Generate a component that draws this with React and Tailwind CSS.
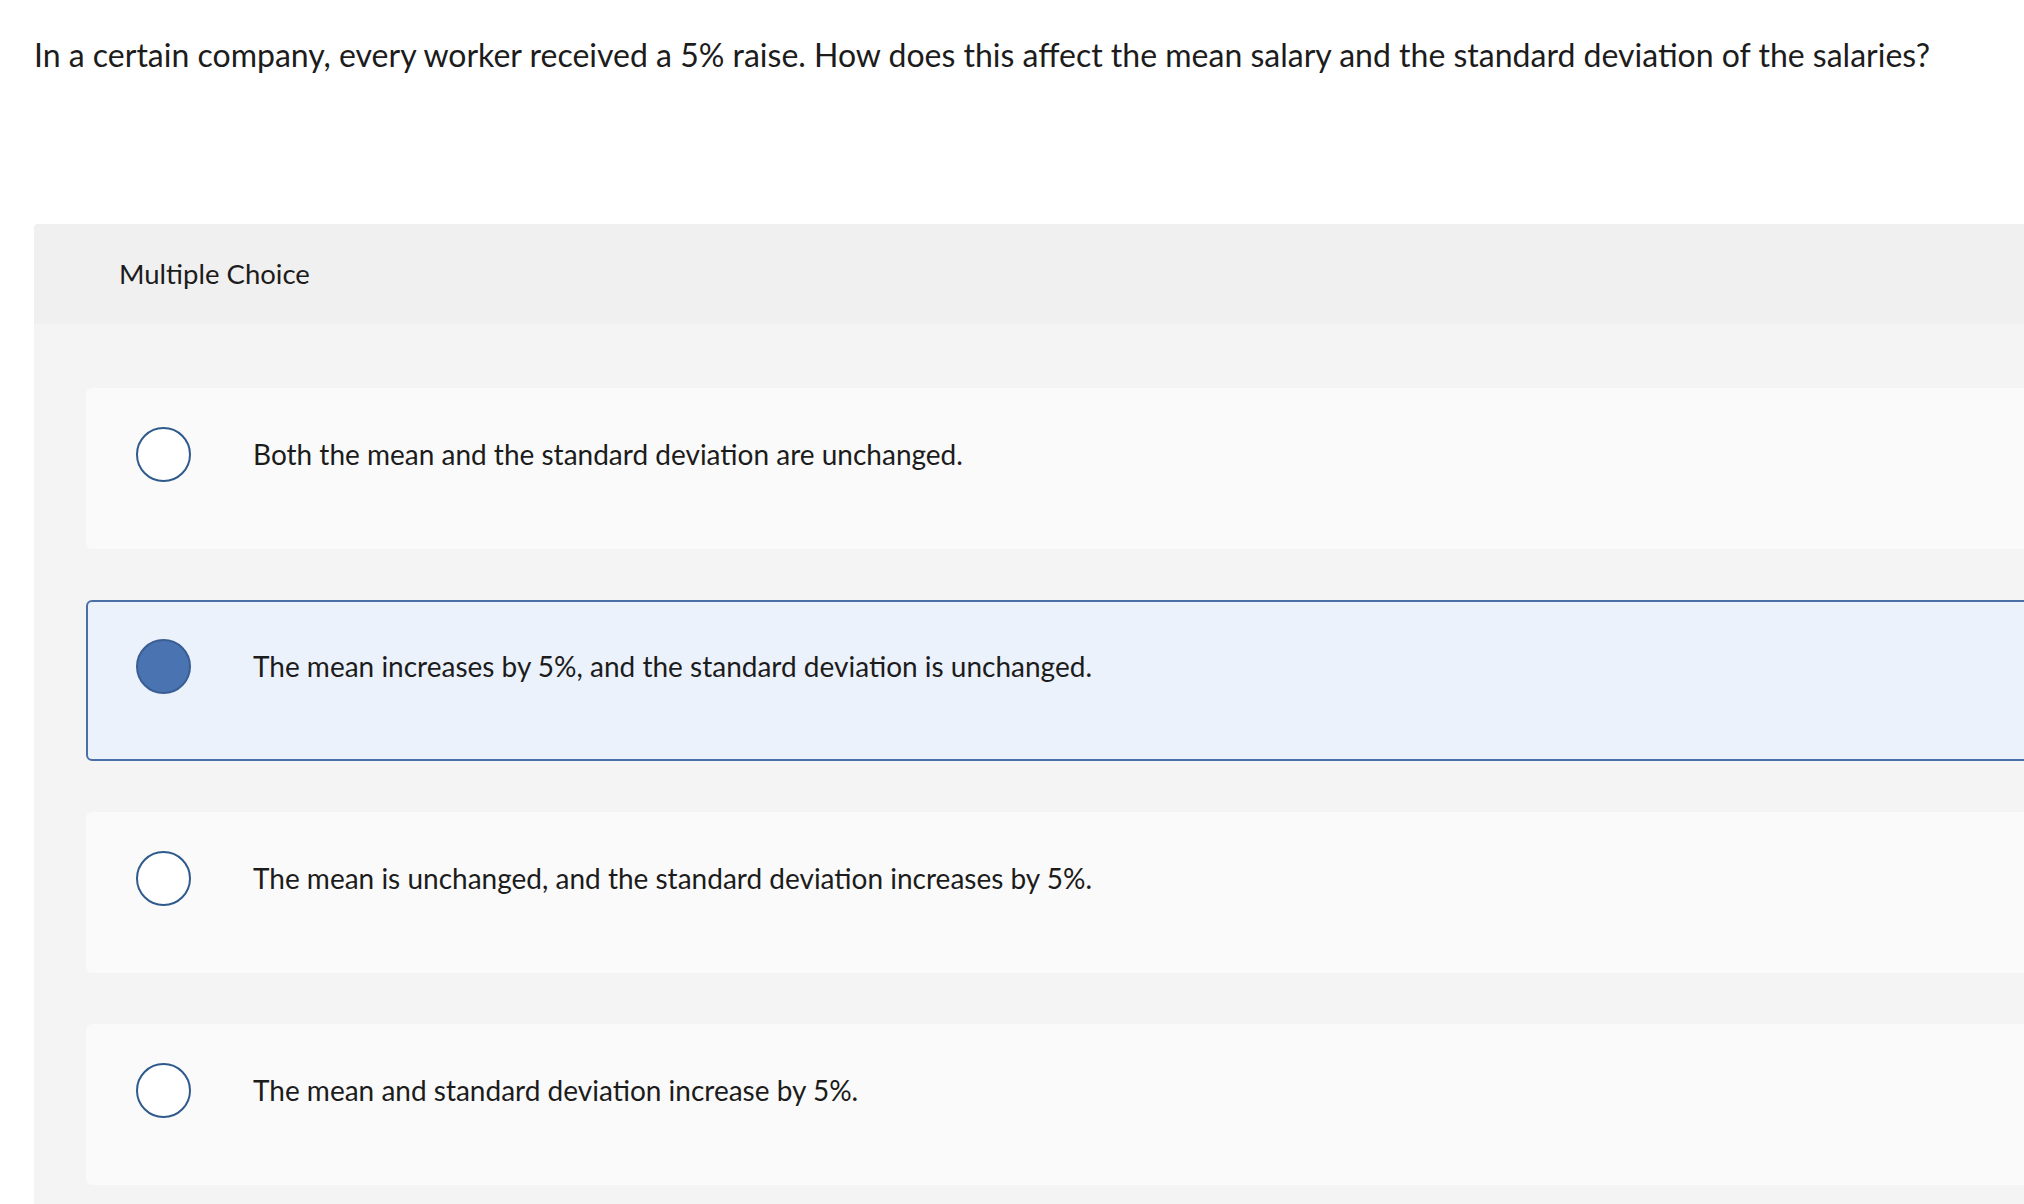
const options = [
  { text: 'Both the mean and the standard deviation are unchanged.', selected: false },
  { text: 'The mean increases by 5%, and the standard deviation is unchanged.', selected: true },
  { text: 'The mean is unchanged, and the standard deviation increases by 5%.', selected: false },
  { text: 'The mean and standard deviation increase by 5%.', selected: false },
]

export default function App() {
  return (
    <div className="w-[2024px] h-[1204px] overflow-hidden bg-white text-[#1c1c1c] font-['Lato',sans-serif]">
      <p className="pl-[34px] pt-[37px] text-[32px] leading-[36px]">
        In a certain company, every worker received a 5% raise. How does this affect the mean salary and the standard deviation of the salaries?
      </p>

      <div className="ml-[34px] mt-[151px] w-[2100px] rounded-t-[4px] bg-[#f4f4f4]">
        <div className="flex h-[100px] items-center rounded-t-[4px] bg-[#f0f0f0] pl-[85px] text-[27.5px]">
          Multiple Choice
        </div>

        <div className="flex flex-col gap-[51px] pl-[52px] pt-[64px] pb-[40px]">
          {options.map((o) => (
            <div
              key={o.text}
              className={`flex h-[161px] items-start gap-[62px] rounded-[6px] border-2 pl-[48px] pt-[37px] ${
                o.selected ? 'border-[#4a6fa6] bg-[#ecf2fb]' : 'border-transparent bg-[#fafafa]'
              }`}
            >
              <span
                className={`h-[55px] w-[55px] shrink-0 rounded-full border-2 ${
                  o.selected ? 'border-[#3a5e93] bg-[#4a73b2]' : 'border-[#2f5a8c] bg-white'
                }`}
              />
              <span className="mt-[10px] text-[28px] leading-[34px]">{o.text}</span>
            </div>
          ))}
        </div>
      </div>
    </div>
  )
}
